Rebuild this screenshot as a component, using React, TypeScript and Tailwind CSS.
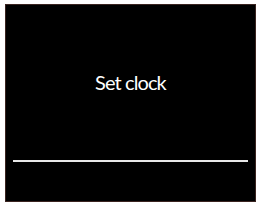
export default function App() {
  return (
    <div className="w-[257px] h-[203px] bg-white pl-[5px] pt-[4px] pr-[1px] pb-[1px]">
      <div className="w-full h-full bg-black border border-[#3a2420] flex flex-col">
        <div className="h-[57px]" />
        <div
          className="text-center text-white text-[20px] leading-[40px] tracking-[-0.9px]"
          style={{ fontFamily: "Lato, 'Noto Sans', sans-serif" }}
        >
          Set clock
        </div>
        <div className="flex-1" />
        <div className="mx-[7px] h-[2px] bg-[#e8e8e8] mb-[39px]" />
      </div>
    </div>
  );
}
